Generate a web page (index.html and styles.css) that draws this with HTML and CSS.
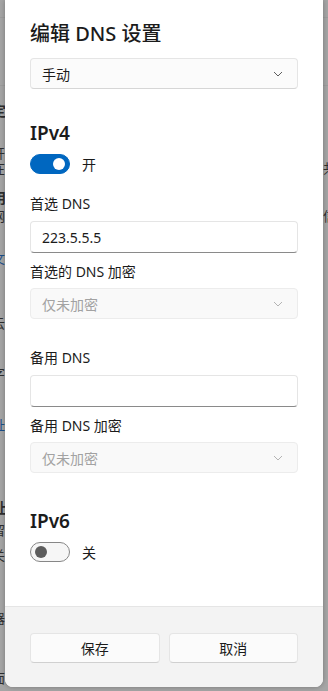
FILE: index.html
```html
<!DOCTYPE html>
<html lang="zh-CN">
<head>
<meta charset="UTF-8">
<meta name="viewport" content="width=device-width, initial-scale=1.0">
<title>编辑 DNS 设置</title>
<link rel="stylesheet" href="styles.css">
</head>
<body>
    <!-- settings page behind the dialog, mostly covered -->
    <div class="backdrop" aria-hidden="true">
        <div class="bd-row bd-line" style="height: 17px"></div>
        <div class="bd-row bd-line" style="height: 67px"></div>
        <div class="bd-row" style="height: 18px"></div>
        <div class="bd-row big" style="height: 42px"><span>定</span><span></span></div>
        <div class="bd-row" style="height: 15px"><span>开</span><span></span></div>
        <div class="bd-row" style="height: 30px"><span>在</span><span>共</span></div>
        <div class="bd-row big" style="height: 18px"><span>用</span><span></span></div>
        <div class="bd-row" style="height: 42px"><span>网</span><span>信</span></div>
        <div class="bd-row bd-link" style="height: 65px"><span>文</span><span></span></div>
        <div class="bd-row" style="height: 50px"><span>云</span><span></span></div>
        <div class="bd-row" style="height: 52px"><span>字</span><span></span></div>
        <div class="bd-row bd-link" style="height: 83px"><span>址</span><span></span></div>
        <div class="bd-row big" style="height: 22px"><span>址</span><span></span></div>
        <div class="bd-row" style="height: 25px"><span>留</span><span></span></div>
        <div class="bd-row" style="height: 63px"><span>关</span><span></span></div>
        <div class="bd-row" style="height: 25px"><span>器</span><span></span></div>
        <div class="bd-row" style="height: 35px"><span>S</span><span></span></div>
        <div class="bd-row"><span>面</span><span></span></div>
    </div>

    <div class="dialog">
        <div class="dialog-body">
            <h1 class="dialog-title">编辑 DNS 设置</h1>

            <div class="select mode">
                <span>手动</span>
                <svg class="chevron" width="10" height="6" viewBox="0 0 10 6"><path d="M1 1 L5 5 L9 1" fill="none" stroke="currentColor" stroke-width="1"/></svg>
            </div>

            <h2 class="section-title">IPv4</h2>
            <div class="toggle-row">
                <span class="toggle on"><span class="knob"></span></span>
                <span>开</span>
            </div>

            <label class="field-label first">首选 DNS</label>
            <div class="textbox">223.5.5.5</div>

            <label class="field-label">首选的 DNS 加密</label>
            <div class="select disabled">
                <span>仅未加密</span>
                <svg class="chevron" width="10" height="6" viewBox="0 0 10 6"><path d="M1 1 L5 5 L9 1" fill="none" stroke="currentColor" stroke-width="1"/></svg>
            </div>

            <label class="field-label spaced">备用 DNS</label>
            <div class="textbox"></div>

            <label class="field-label">备用 DNS 加密</label>
            <div class="select disabled">
                <span>仅未加密</span>
                <svg class="chevron" width="10" height="6" viewBox="0 0 10 6"><path d="M1 1 L5 5 L9 1" fill="none" stroke="currentColor" stroke-width="1"/></svg>
            </div>

            <h2 class="section-title ipv6">IPv6</h2>
            <div class="toggle-row">
                <span class="toggle"><span class="knob"></span></span>
                <span>关</span>
            </div>
        </div>

        <div class="dialog-footer">
            <button>保存</button>
            <button>取消</button>
        </div>
    </div>
</body>
</html>
```

FILE: styles.css
```css
body {
    margin: 0;
    height: 691px;
    overflow: hidden;
    position: relative;
    background-color: #a5a5a5;
    font-family: "Noto Sans", "Noto Sans CJK SC", sans-serif;
    color: #1b1b1b;
}

/* page behind the overlay */
.backdrop {
    position: absolute;
    inset: 0;
    display: flex;
    flex-direction: column;
    color: #2e2e2e;
}
.bd-row {
    display: flex;
    flex-shrink: 0;
    justify-content: space-between;
    margin: 0 -8px;
    font-size: 13px;
    line-height: 14px;
}
.bd-row.big {
    font-size: 14px;
    font-weight: 600;
}
.bd-line {
    border-bottom: 1px solid #9c9c9c;
}
.bd-link {
    color: #1d4f8a;
}

/* dialog */
.dialog {
    position: relative;
    margin-left: 5px;
    width: 318px;
    background-color: #fff;
    border-radius: 0 0 8px 8px;
    overflow: hidden;
    box-shadow: 0 0 5px rgba(0, 0, 0, 0.28);
}
.dialog-body {
    height: 606px;
    box-sizing: border-box;
    padding: 20px 25px 0;
}
.dialog-title {
    margin: 0;
    font-size: 20px;
    font-weight: 500;
    line-height: 28px;
}
.section-title {
    margin: 30px 0 0;
    font-size: 19px;
    font-weight: 600;
    line-height: 28px;
}
.section-title.ipv6 {
    margin-top: 34px;
}

.select,
.textbox {
    display: flex;
    align-items: center;
    justify-content: space-between;
    height: 31px;
    box-sizing: border-box;
    margin-top: 6px;
    padding: 0 14px 0 11px;
    border: 1px solid #e5e5e5;
    border-radius: 4px;
    background-color: #fbfbfb;
    font-size: 14px;
}
.select.mode {
    margin-top: 10px;
    border-bottom-color: #d6d6d6;
}
.textbox {
    height: 32px;
    margin-top: 7px;
    background-color: #fff;
    border-bottom-color: #8a8a8a;
}
.select.disabled {
    background-color: #f9f9f9;
    border-color: #ececec;
    color: #a2a2a2;
}
.chevron {
    color: #5e5e5e;
}
.select.disabled .chevron {
    color: #b4b4b4;
}

.field-label {
    display: block;
    margin-top: 9px;
    font-size: 14px;
    line-height: 20px;
}
.field-label.first {
    margin-top: 20px;
}
.field-label.spaced {
    margin-top: 29px;
}

.toggle-row {
    display: flex;
    align-items: center;
    gap: 12px;
    margin-top: 7px;
    height: 20px;
    font-size: 14px;
}
.toggle {
    display: flex;
    align-items: center;
    width: 40px;
    height: 20px;
    box-sizing: border-box;
    padding: 0 4px;
    border: 1px solid #878787;
    border-radius: 10px;
    background-color: #f6f6f6;
}
.toggle .knob {
    width: 12px;
    height: 12px;
    border-radius: 50%;
    background-color: #5d5d5d;
}
.toggle.on {
    justify-content: flex-end;
    border-color: #0067c0;
    background-color: #0067c0;
}
.toggle.on .knob {
    background-color: #fff;
}

.dialog-footer {
    display: flex;
    gap: 9px;
    padding: 26px 25px 24px;
    border-top: 1px solid #e5e5e5;
    background-color: #f3f3f3;
}
.dialog-footer button {
    flex: 1;
    height: 30px;
    border: 1px solid #e5e5e5;
    border-bottom-color: #d0d0d0;
    border-radius: 4px;
    background-color: #fbfbfb;
    font-family: "Noto Sans", "Noto Sans CJK SC", sans-serif;
    font-size: 14px;
    color: #1b1b1b;
}
```
